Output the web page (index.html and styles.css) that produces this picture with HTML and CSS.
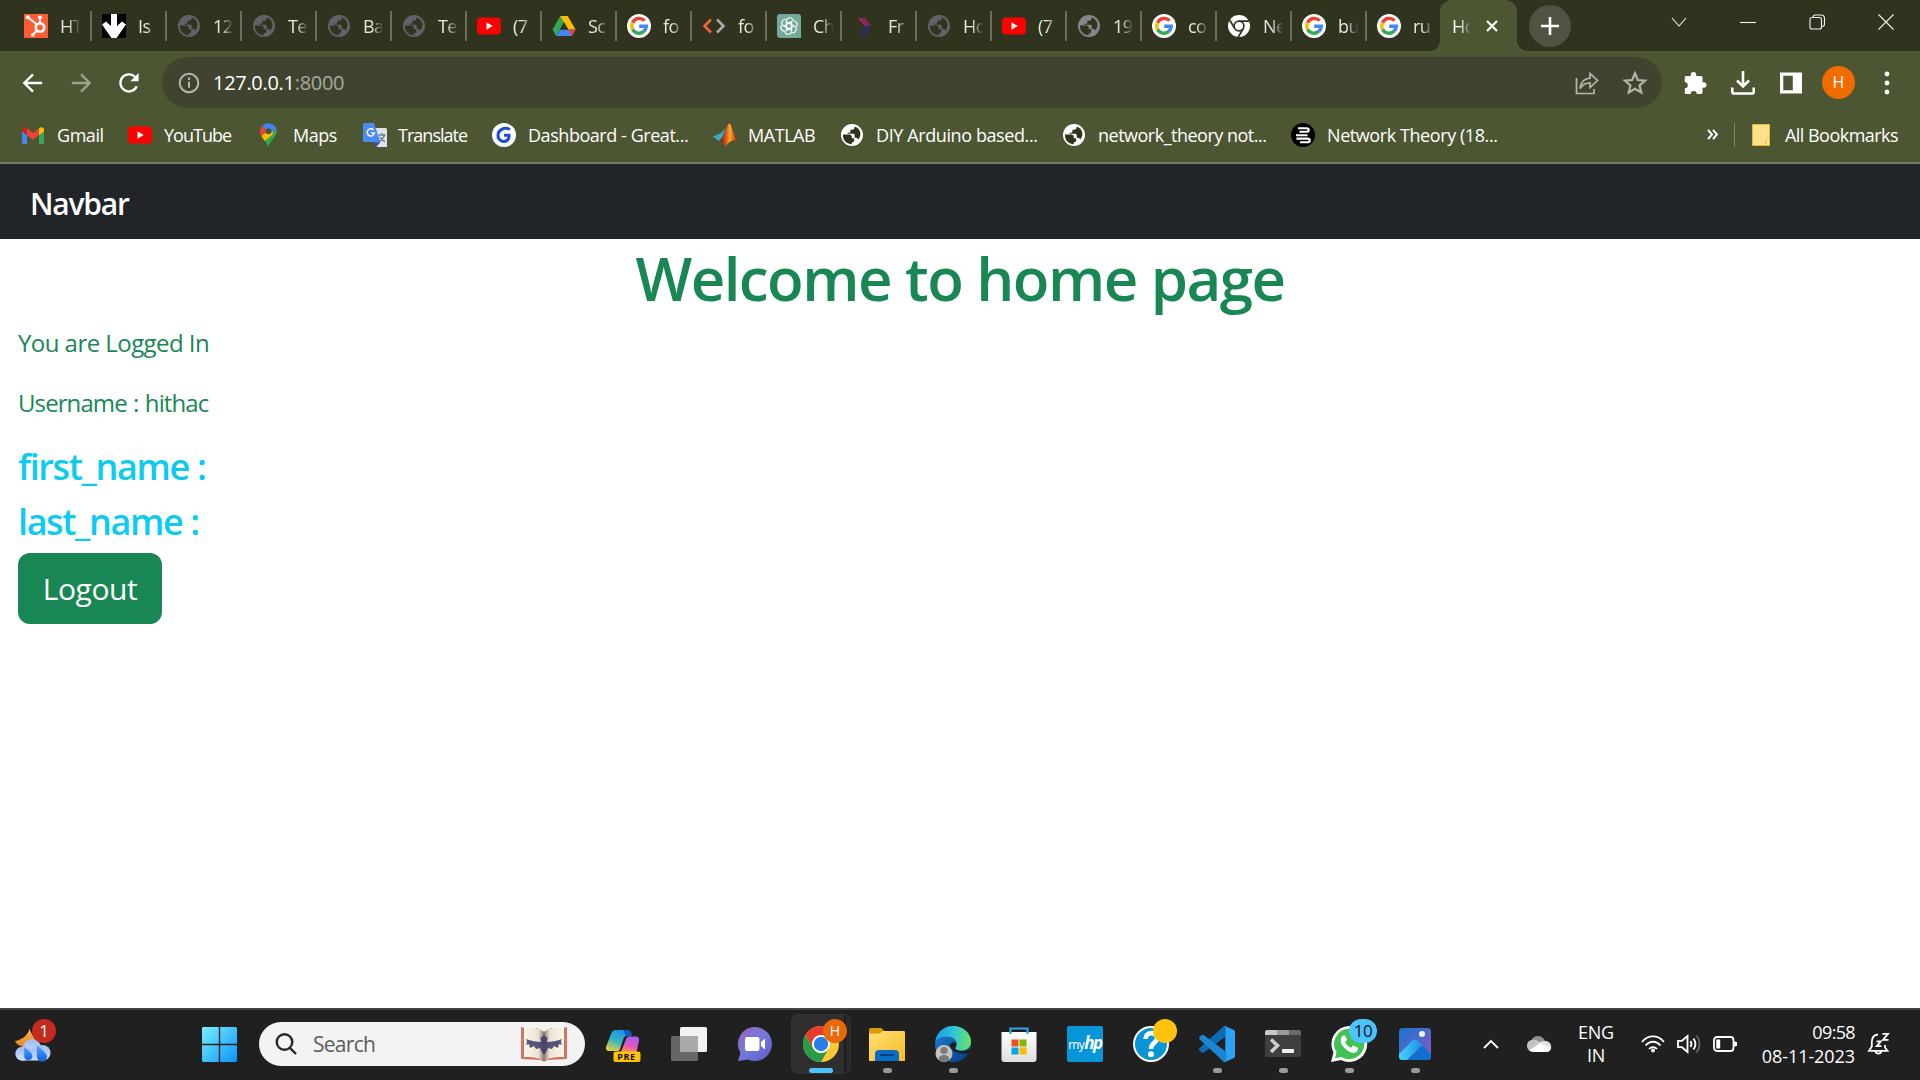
FILE: index.html
```html
<!DOCTYPE html>
<html lang="en">
<head>
<meta charset="utf-8">
<title>Home</title>
<link rel="stylesheet" href="styles.css">
</head>
<body>
<svg class="sprite" aria-hidden="true">
  <defs>
    <linearGradient id="win" x1="0" y1="0" x2="1" y2="1"><stop offset="0" stop-color="#7af0ff"/><stop offset="1" stop-color="#0a94fb"/></linearGradient>
    <linearGradient id="cop1" x1="0.6" y1="0" x2="0.2" y2="1"><stop offset="0" stop-color="#1f8fe8"/><stop offset=".5" stop-color="#2fb6c4"/><stop offset="1" stop-color="#f0cf38"/></linearGradient>
    <linearGradient id="cop2" x1="0.6" y1="0" x2="0.3" y2="1"><stop offset="0" stop-color="#a35cf0"/><stop offset=".55" stop-color="#e255c0"/><stop offset="1" stop-color="#ff8a5a"/></linearGradient>
    <linearGradient id="chat" x1="0" y1="0" x2="1" y2="1"><stop offset="0" stop-color="#9a68b8"/><stop offset=".5" stop-color="#7478dc"/><stop offset="1" stop-color="#5a5cc8"/></linearGradient>
    <linearGradient id="fold" x1="0" y1="0" x2="1" y2="1"><stop offset="0" stop-color="#ffe07a"/><stop offset="1" stop-color="#fbb91f"/></linearGradient>
    <linearGradient id="edge1" x1="0" y1="0.4" x2="1" y2="0.5"><stop offset="0" stop-color="#1a9be8"/><stop offset=".5" stop-color="#2fc4d8"/><stop offset="1" stop-color="#6be364"/></linearGradient>
    <linearGradient id="edge2" x1="0" y1="0" x2="0.8" y2="1"><stop offset="0" stop-color="#1b86d8"/><stop offset="1" stop-color="#0a3f8c"/></linearGradient>
    <linearGradient id="store" x1="0" y1="0" x2="0" y2="1"><stop offset="0" stop-color="#fff"/><stop offset="1" stop-color="#dedede"/></linearGradient>
    <linearGradient id="photo" x1="0" y1="0" x2="1" y2="1"><stop offset="0" stop-color="#1976d2"/><stop offset=".6" stop-color="#5a64c8"/><stop offset="1" stop-color="#9a55b8"/></linearGradient>
    <linearGradient id="hill" x1="0" y1="0" x2="1" y2="0"><stop offset="0" stop-color="#45d6fb"/><stop offset="1" stop-color="#1a8ae4"/></linearGradient>
    <linearGradient id="cloud" x1="0" y1="0" x2="0" y2="1"><stop offset="0" stop-color="#9dbcf2"/><stop offset="1" stop-color="#cfe0fc"/></linearGradient>
    <linearGradient id="drop" x1="0" y1="0" x2="0" y2="1"><stop offset="0" stop-color="#5aa5f5"/><stop offset="1" stop-color="#0a62e8"/></linearGradient>
    <linearGradient id="moon" x1="0" y1="0" x2="0" y2="1"><stop offset="0" stop-color="#fbc04a"/><stop offset="1" stop-color="#e8831e"/></linearGradient>
    <linearGradient id="paper" x1="0" y1="0" x2="1" y2="0"><stop offset="0" stop-color="#fbf6e8"/><stop offset=".36" stop-color="#ebe4d5"/><stop offset=".5" stop-color="#847a72"/><stop offset=".64" stop-color="#ebe4d5"/><stop offset="1" stop-color="#fbf6e8"/></linearGradient>
    <linearGradient id="mat" x1="0" y1="0" x2="1" y2="0"><stop offset="0" stop-color="#7a1a12"/><stop offset=".4" stop-color="#e0601e"/><stop offset=".58" stop-color="#ffa82a"/><stop offset="1" stop-color="#b82a14"/></linearGradient>
  </defs>
  <symbol id="i-globe" viewBox="0 0 24 24"><circle cx="12" cy="12" r="11" fill="currentColor"/><path class="hole" d="M3 11.500h6.200c1.600 0 2.600 1 2.600 2.500v1.200h2.400v2.300c0 1-.8 1.800-1.800 1.800h-.6v1.900C6.300 21 2.600 17 3 11.500zM14.500 3.400v1.100c0 1.300-.9 2.200-2.200 2.200h-1.900v1.700c0 .8-.5 1.300-1.300 1.300H7.600v1.100h5.600c.9 0 1.500.6 1.500 1.400v2.600h1c1.200 0 2 .7 2.400 1.700 3.900-4.300 3-11-3.600-13.100z"/></symbol>
  <symbol id="i-yt" viewBox="0 0 24 24"><rect y="3.500" width="24" height="17" rx="4" fill="#f00"/><path d="M9.500 8.300v7.400l6.200-3.700z" fill="#fff"/></symbol>
  <symbol id="i-g" viewBox="0 0 24 24"><circle cx="12" cy="12" r="12" fill="#fff"/><g fill="none" stroke-width="3.400"><path d="M17.600 6.700A7.300 7.300 0 0 0 5.600 8.700" stroke="#ea4335"/><path d="M5.600 8.700a7.300 7.300 0 0 0 0 6.700" stroke="#fbbc05"/><path d="M5.600 15.400a7.300 7.300 0 0 0 11.200 2" stroke="#34a853"/><path d="M16.800 17.400c1.500-1.400 2.400-3.100 2.500-5.100h-7.100" stroke="#4285f4"/></g></symbol>
  <symbol id="i-drive" viewBox="0 0 24 24"><path d="M8.300 2h7.400l-3.700 6.300-8 13.700L.5 15.500z" fill="#34a853"/><path d="M8.300 2h7.400l7.900 13.500h-7.300z" fill="#fbbc05"/><path d="M8 15.500h15.600L19.800 22H4.200z" fill="#4285f4"/><path d="M16.300 15.500h7.300L19.800 22z" fill="#ea4335"/><path d="M12 8.500l4 7H8z" fill="#30341f"/></symbol>
  <symbol id="i-chrome" viewBox="0 0 36 36"><circle cx="18" cy="18" r="18" fill="#fcc934"/><path d="M2.400 9A18 18 0 0 1 33.600 9H18a9 9 0 0 0-7.800 13.500z" fill="#e83b2e"/><path d="M2.400 9A18 18 0 0 0 18 36l7.800-13.500a9 9 0 0 1-15.600 0z" fill="#2a9c48"/><circle cx="18" cy="18" r="9" fill="#fff"/><circle cx="18" cy="18" r="7.200" fill="#2b7de9"/></symbol>
</svg>

<header class="browser">
  <div class="tabstrip">
    <div class="tab tab-first"><svg viewBox="0 0 24 24"><path fill="#ff5c35" d="M0 0h24v24H0z"/><g stroke="#fff" stroke-width="1.900" fill="none"><circle cx="16" cy="13.500" r="4.200" stroke-width="2.600"/><path d="M4 3.500l9 7M16 9V4M13 16.500l-4 4"/></g><g fill="#fff"><circle cx="3.800" cy="3.200" r="2"/><circle cx="16" cy="3.600" r="2"/><circle cx="8.800" cy="21" r="1.700"/></g></svg><span>HT</span></div>
    <div class="tab"><svg viewBox="0 0 24 24"><path d="M0 0h24v24H0z"/><path fill="#fff" d="M9 0h6v12l5-4.500 4 3L14.500 24h-5L0 10.500l4-3L9 12z"/></svg><span>Is</span></div>
    <div class="tab dim"><svg><use href="#i-globe"/></svg><span>12</span></div>
    <div class="tab dim"><svg><use href="#i-globe"/></svg><span>Te</span></div>
    <div class="tab dim"><svg><use href="#i-globe"/></svg><span>Ba</span></div>
    <div class="tab dim"><svg><use href="#i-globe"/></svg><span>Te</span></div>
    <div class="tab"><svg><use href="#i-yt"/></svg><span>(7</span></div>
    <div class="tab"><svg><use href="#i-drive"/></svg><span>Sc</span></div>
    <div class="tab"><svg><use href="#i-g"/></svg><span>fo</span></div>
    <div class="tab"><svg viewBox="0 0 24 24" fill="none" stroke-width="2.600"><path d="M9 5.500L2.500 12 9 18.500" stroke="#f0643a"/><path d="M15 5.500l6.500 6.500-6.500 6.500" stroke="#a8a8a8"/></svg><span>fo</span></div>
    <div class="tab"><svg viewBox="0 0 24 24"><path d="M3 0h18a3 3 0 0 1 3 3v21H3a3 3 0 0 1-3-3V3a3 3 0 0 1 3-3z" fill="#74aa9c"/><g fill="none" stroke="#fff" stroke-width="1.100"><path id="petal" d="M9.300 13.500V7.600c0-4.500 5.600-5 6.900-1.700M9.300 7.600l5.200 3"/><use href="#petal" transform="rotate(60 12 12)"/><use href="#petal" transform="rotate(120 12 12)"/><use href="#petal" transform="rotate(180 12 12)"/><use href="#petal" transform="rotate(240 12 12)"/><use href="#petal" transform="rotate(300 12 12)"/></g></svg><span>Ch</span></div>
    <div class="tab"><svg viewBox="0 0 24 24"><path d="M6 4h7l6 8h-6z" fill="#b3207e"/><path d="M13 12h6l-5.500 9H7z" fill="#2c2c70"/><path d="M8.500 4l7.500 8-6.500 9M11 4l7 8" fill="none" stroke="#30341f" stroke-width=".8"/></svg><span>Fr</span></div>
    <div class="tab dim"><svg><use href="#i-globe"/></svg><span>Ho</span></div>
    <div class="tab"><svg><use href="#i-yt"/></svg><span>(7</span></div>
    <div class="tab gray"><svg><use href="#i-globe"/></svg><span>19</span></div>
    <div class="tab"><svg><use href="#i-g"/></svg><span>co</span></div>
    <div class="tab"><svg viewBox="0 0 24 24"><circle cx="12" cy="12" r="11" fill="#fff"/><g fill="none" stroke="#30341f" stroke-width="1.700"><circle cx="12" cy="12" r="4.900"/><path d="M12 7.100h10M7.800 14.500L2.500 5.800M16.200 14.500L11 23.500"/></g></svg><span>Ne</span></div>
    <div class="tab"><svg><use href="#i-g"/></svg><span>bu</span></div>
    <div class="tab tab-last"><svg><use href="#i-g"/></svg><span>ru</span></div>
    <div class="tab-active"><span>Ho</span><svg viewBox="0 0 12 12" stroke="#fff" stroke-width="2.200"><path d="M1 1l10 10M11 1L1 11"/></svg></div>
    <div class="newtab"><svg viewBox="0 0 18 18" stroke="#fff" stroke-width="2.600"><path d="M9 0v18M0 9h18"/></svg></div>
    <div class="winbtns">
      <svg viewBox="0 0 16 16"><path d="M1 4l7 8 7-8"/></svg>
      <svg viewBox="0 0 16 16"><path d="M0 8.500h16"/></svg>
      <svg viewBox="0 0 16 16"><rect x="1" y="3.500" width="11.500" height="11.500" rx="2"/><path d="M4 3.500c0-1.500 1-2.500 2.500-2.500H12c2 0 3.500 1.500 3.500 3.500V10c0 1.400-1 2.500-2.500 2.500"/></svg>
      <svg viewBox="0 0 16 16"><path d="M.5.500l15 15M15.500.5l-15 15"/></svg>
    </div>
  </div>

  <div class="toolbar">
    <div class="nav">
      <svg viewBox="0 0 24 24"><path d="M22 12H3M12 2.500L2.500 12l9.500 9.500"/></svg>
      <svg class="off" viewBox="0 0 24 24"><path d="M2 12h19M12 2.500l9.500 9.500-9.500 9.500"/></svg>
      <svg viewBox="0 0 24 24"><path d="M20.500 15.500a9.300 9.300 0 1 1-1.800-10L21 8"/><path d="M22.500 1v9h-9z" fill="#fff" stroke="none"/></svg>
    </div>
    <div class="omnibox">
      <svg class="info" viewBox="0 0 22 22"><circle cx="11" cy="11" r="9.300"/><path d="M11 9.800v6M11 5.600V8"/></svg>
      <p class="url">127.0.0.1<span>:8000</span></p>
      <svg class="share" viewBox="0 0 24 24"><path d="M1.500 7v15.500H19V18M5 17.500C6 10.500 9.500 7.500 15 7.200V2.500l7.500 7-7.500 7v-4.700c-4.500 0-7.500 1.700-10 5.700z"/></svg>
      <svg class="star" viewBox="0 0 24 24"><path d="M12 3l2.600 6.200 6.700.6-5.100 4.400 1.600 6.600L12 17.300l-5.800 3.500 1.600-6.600-5.100-4.400 6.700-.6z"/></svg>
    </div>
    <div class="actions">
      <svg viewBox="0 0 24 24"><path fill="#fff" d="M3.200 5h4.600V3.700a2.700 2.700 0 0 1 5.400 0V5h4.900c.8 0 1.400.6 1.400 1.400v4.900h1.300a2.700 2.700 0 0 1 0 5.400h-1.300v4.900c0 .8-.6 1.400-1.400 1.400h-4.400a3 3 0 0 0-6 0H3.200c-.8 0-1.400-.6-1.400-1.400v-4.400a3 3 0 0 0 0-6V6.400C1.800 5.600 2.400 5 3.200 5z"/></svg>
      <svg viewBox="0 0 24 24" fill="none" stroke="#fff" stroke-width="2.600"><path d="M12 0v15M6 9.500l6 6 6-6M1.300 16.500v4.200c0 1 .7 1.800 1.800 1.800h17.800c1 0 1.800-.8 1.800-1.800v-4.200"/></svg>
      <svg viewBox="0 0 24 24"><path fill="#fff" fill-rule="evenodd" d="M1 1.500h22v21H1zM4.300 4.800v14.400h9.500V4.800z"/></svg>
      <b class="avatar">H</b>
      <svg viewBox="0 0 24 24" fill="#fff"><circle cx="12" cy="3" r="2.400"/><circle cx="12" cy="12" r="2.400"/><circle cx="12" cy="21" r="2.400"/></svg>
    </div>
  </div>

  <div class="bookmarks">
    <a class="bm-gmail"><svg viewBox="0 0 22 24"><path fill="#4285f4" d="M0 6h5v15H1.500C.6 21 0 20.500 0 19.500z"/><path fill="#34a853" d="M17 6h5v13.500c0 1-.6 1.500-1.500 1.500H17z"/><path fill="#c5221f" d="M0 6.500C0 4 3 3.500 4.500 5L5 5.300V12L0 8.500z"/><path fill="#fbbc04" d="M22 6.500C22 4 19 3.500 17.500 5l-.5.3V12l5-3.500z"/><path fill="#ea4335" d="M5 5.300l6 4.700 6-4.700V12l-6 4.700L5 12z"/></svg>Gmail</a>
    <a class="bm-yt"><svg><use href="#i-yt"/></svg>YouTube</a>
    <a class="bm-maps"><svg viewBox="0 0 17 24"><path fill="#34a853" d="M8.500 24C7.500 19 1 15.500.3 9.500L8.500.5 16.400 6c2 7-6.700 11-7.900 18z"/><path fill="#fbbc04" d="M1.300 12.500L12 5l1 6-8 7c-1.500-1.800-3-3.500-3.700-5.500z"/><path fill="#ea4335" d="M.2 8.500C.2 6 1 4.200 2.300 2.800L8 8l-6.700 5C.6 11.500.2 10 .2 8.500z"/><path fill="#4285f4" d="M2.300 2.800C6-1.500 14.500-.5 16.500 6.300L9 10z"/><circle cx="8.500" cy="8.300" r="3" fill="#4d5632"/></svg>Maps</a>
    <a class="bm-tr"><svg viewBox="0 0 24 24"><path fill="#dfe2e6" d="M8 5h14.500c.8 0 1.500.6 1.500 1.500V24H14z"/><path fill="#3a56c5" d="M11 19h6.500l-4 4.800z"/><path fill="#4b8bf5" d="M1.500 0H11l6.500 19h-16A1.500 1.500 0 0 1 0 17.500v-16C0 .6.600 0 1.500 0z"/><path d="M10.500 7a3.600 3.600 0 1 0 .9 3H8" fill="none" stroke="#fff" stroke-width="1.500"/><path d="M15.500 12h7M19 10v2M21.500 12c-.8 3-2.600 5-5 6.500M17 14c1 2 3 3.800 5 5" fill="none" stroke="#6b7f8c" stroke-width="1.300"/></svg>Translate</a>
    <a class="bm-gl"><svg viewBox="0 0 24 24"><circle cx="12" cy="12" r="12" fill="#fff"/><path d="M18 6.500C12 3.500 6 7 6 12.500c0 4.500 4.500 7 8 5.500 2.500-1 3.300-3.500 3-5.700h-5" fill="none" stroke="#1c4fd0" stroke-width="3"/></svg>Dashboard - Great...</a>
    <a class="bm-ml"><svg viewBox="0 0 24 24"><path fill="#39a9c4" d="M0 13.500L8 10l4.500-5L9 16l-3.500 2z"/><path fill="url(#mat)" d="M7 17c4-3 6-14 9-16.500 2.500-.5 4 11 8 18-4-2.500-6-1-12 5.500-1-4-2-6-5-7z"/></svg>MATLAB</a>
    <a class="bm-diy"><svg><use href="#i-globe"/></svg>DIY Arduino based...</a>
    <a class="bm-nt"><svg><use href="#i-globe"/></svg>network_theory not...</a>
    <a class="bm-nt18"><svg viewBox="0 0 24 24"><circle cx="12" cy="12" r="12"/><path d="M7 5.200h8.500c3 0 3 3.600 0 3.600H8.500M5 12.200h11.500M5.500 15.600h11c3 0 3 3.600 0 3.600H9" fill="none" stroke="#fff" stroke-width="2.100"/></svg>Network Theory (18...</a>
    <svg class="more" viewBox="0 0 11 11" fill="none" stroke="#fff" stroke-width="1.900"><path d="M1 1l4 4.500L1 10M6 1l4 4.500L6 10"/></svg>
    <i class="rule"></i>
    <a class="bm-all"><svg viewBox="0 0 18 22"><path fill="#ffe28a" stroke="#e8bc3a" d="M.5.500h17v21H.5z"/><path fill="#ffe9a6" stroke="#e8bc3a" d="M17.500 14c-2.500 0-3.500 1-3.500 3v4.500h3.500z"/></svg>All Bookmarks</a>
  </div>
</header>

<nav class="navbar"><a class="brand">Navbar</a></nav>
<main class="page">
  <h1>Welcome to home page</h1>
  <p class="status">You are Logged In</p>
  <p class="user">Username : hithac</p>
  <h3 class="first">first_name :</h3>
  <h3 class="last">last_name :</h3>
  <button class="logout">Logout</button>
</main>

<footer class="taskbar">
  <div class="weather"><svg viewBox="0 0 38 38"><path fill="url(#moon)" d="M15 4.500c-.5 6-7 12-15 13.500 2.500 6 13 9 20 2.500 4-4-5-10-5-16z"/><g fill="url(#cloud)"><circle cx="7.500" cy="31" r="7.200"/><circle cx="17.500" cy="25.500" r="9.500"/><circle cx="28.500" cy="30" r="8"/><path d="M7 26h22v12H7z"/></g><path fill="url(#drop)" d="M9.500 24c4 4.500 8.500 6 8.500 10a4.300 4.300 0 0 1-8.500 0zM22.500 22c5 5.500 10.500 8 10.500 12a5 5 0 0 1-10.500 0z"/></svg><b class="badge red">1</b></div>
  <svg class="start" viewBox="0 0 35 35" fill="url(#win)"><path d="M1 0h15.800v16.800H0V1zM18.200 0H34l1 1v15.800H18.200zM0 18.200h16.800V35H1l-1-1zM18.200 18.200H35V34l-1 1H18.200z"/></svg>
  <div class="search">
    <svg class="mag" viewBox="0 0 22 22"><circle cx="9.500" cy="9" r="7.800"/><path d="M15 15l6 6"/></svg>
    <span>Search</span>
    <svg class="book" viewBox="0 0 46 35"><path fill="#cf7466" d="M0 0l4 1h38l4-1v32l-20 1-3 2-3-2-20-1z"/><path fill="#f3f3f3" d="M14 0h18l-9 5z"/><path fill="url(#paper)" d="M3 1c9-1 16 0 20 4 4-4 11-5 20-4v29c-9-.5-15 .5-20 4-5-3.500-11-4.500-20-4z"/><path fill="#3c3a68" opacity=".85" d="M23 7l1.500 3h2l-.5 5c4 0 10-1 15-3-1.500 2-1 4 0 6l-3-1-1 4-4-2-2 3-4-1-2 4-2 3-2-3-2-4-4 1-2-3-4 2-1-4-3 1c1-2 1.500-4 0-6 5 2 11 3 15 3l-.5-5h2z"/></svg>
  </div>
  <div class="apps">
    <div class="app"><svg viewBox="0 0 36 36"><path fill="url(#cop1)" d="M6 8c1-3 2.500-4 5-4h11c3 0 4 2 4.500 5l-5 1c-2 0-2.500 1-3.500 4l-3 9c-.6 1.800-1.500 2-3 2H4c-2.500 0-3.500-2-3-4z"/><path fill="#1656c8" d="M18 4h4c3 0 4 2 5 6h-5c-2 0-2-4-4-6z"/><path fill="url(#cop2)" d="M21 13c.8-2 2-2.500 4-2.500h6c2 0 3.500 1.500 3 4L31.500 26H16z"/><rect x="8.500" y="25.500" width="27" height="10.500" rx="2" fill="#ffc400"/><text x="12.300" y="34.200" font-size="9" font-weight="700" letter-spacing=".6" fill="#111">PRE</text></svg></div>
    <div class="app"><svg viewBox="0 0 36 36"><rect x="9" y="1" width="27" height="25" rx="1.500" fill="#f2f2f2"/><rect y="10" width="27" height="25" rx="1.500" fill="#666"/><path d="M9 10h18v16H9z" fill="#a9a9a9"/></svg></div>
    <div class="app"><svg viewBox="0 0 36 36"><path fill="url(#chat)" d="M18 1a17 17 0 1 1-7 32.500L1 35l2.500-8A17 17 0 0 1 18 1z"/><rect x="8" y="11" width="14.500" height="14" rx="2" fill="#fff"/><path fill="#fff" d="M24 16l4-3.500v11L24 20z"/></svg></div>
    <div class="app"><div class="tile"><svg><use href="#i-chrome"/></svg></div><b class="badge orange">H</b><i class="run active"></i></div>
    <div class="app"><svg viewBox="0 0 36 36"><path fill="#d99a08" d="M0 4c0-1 .6-2 1.600-2h9.800c1 0 1.300.4 2 1.200L16 6v4H0z"/><path fill="url(#fold)" d="M0 7.500h11c1 0 1.500-2.500 3-2.500h20.500c1 0 1.500.5 1.500 1.500V35H0z"/><path fill="#0a6cc4" d="M6 35V28c0-2.500 1.300-4 4-4h16c2.700 0 4 1.500 4 4v7z"/><path d="M11 29h14" stroke="#083e7c" stroke-width="2"/></svg><i class="run"></i></div>
    <div class="app"><svg viewBox="0 0 36 36"><circle cx="18" cy="18" r="18" fill="url(#edge2)"/><path fill="url(#edge1)" d="M.3 15.500C2 6 9 0 18 0c10.500 0 18 7.500 18 15.500 0 6-4.500 9-9.500 9-4 0-6.300-1.300-6.300-2.500 0-1 1.300-1.500 1.300-4.500 0-4-4-7-9.500-7-6 0-9.700 2.300-11.700 5z"/><path d="M21.500 17c.3 4-1.500 4-1.200 5.500.5 2 7 4 12.200 1.500l4-1.500-3 5c-7 1-18-1.500-18.500-7.500 0-3 3-5 6.500-3z" fill="#202020"/><circle cx="9" cy="27.500" r="8.500" fill="#c6c2c0"/><circle cx="9" cy="24.500" r="3.600" fill="#7d7976"/><path d="M3.500 33.500c0-6 11-6 11 0-3 3-8 3-11 0z" fill="#7d7976"/></svg><i class="run"></i></div>
    <div class="app"><svg viewBox="0 0 36 36"><path fill="url(#store)" d="M.5 6h35v27c0 2-1 3-3 3h-29c-2 0-3-1-3-3z"/><path d="M9.500 8V2.500h17V8" fill="none" stroke="#2aa5e8" stroke-width="2.200"/><path fill="#f25022" d="M10.500 13.500h7v7h-7z"/><path fill="#7fba00" d="M18.500 13.500h7v7h-7z"/><path fill="#00a4ef" d="M10.500 21.500h7v7h-7z"/><path fill="#ffb900" d="M18.500 21.500h7v7h-7z"/></svg></div>
    <div class="app"><div class="myhp">my<b>hp</b></div></div>
    <div class="app"><svg viewBox="0 0 36 36"><circle cx="18" cy="18" r="17" fill="#0696d7" stroke="#fff" stroke-width="2"/><path d="M12.500 13c0-8 12-7.500 11.500-.5-.4 4.500-6 4.500-6 10.500" fill="none" stroke="#fff" stroke-width="4.600"/><circle cx="18" cy="28.300" r="3" fill="#fff"/></svg><b class="badge gold"></b></div>
    <div class="app"><svg viewBox="0 0 36 36"><path fill="#0a6cb4" d="M26 0v11L5 26.500c-1 .8-2 .5-3-.5l-1.500-1.500c-.7-.8-.7-1.700.2-2.500L24 1z"/><path fill="#1a86d4" d="M.7 13.500C0 12.800 0 11.700.6 11L2 9.600c1-1 2-1 3-.3L26 25v11l-2-1z"/><path fill="#2aa3f4" d="M26 0l9 4c.6.300 1 1 1 1.600v24.800c0 .8-.4 1.300-1 1.600l-9 4c-1 .2-1.800-.2-2.500-1 1.500 1 2.800.3 2.800-1.300V2.300C26.300.7 25 0 23.500 1c.7-.8 1.500-1.200 2.500-1z"/></svg><i class="run"></i></div>
    <div class="app"><svg viewBox="0 0 36 36"><rect y="4" width="36" height="27" rx="1.500" fill="#3e3e3e"/><path fill="#c9c9c9" d="M1.500 4H12v5H0V5.500z"/><path fill="#999" d="M12 4h12v5H12z"/><path fill="#6a6a6a" d="M24 4h10.500L36 5.500V9H24z"/><path d="M6 13.500l6.500 6L6 26" fill="none" stroke="#ccc" stroke-width="3.600"/><rect x="17" y="23" width="12" height="4" rx=".8" fill="#eee"/></svg><i class="run"></i></div>
    <div class="app"><svg viewBox="0 0 36 36"><path fill="#fff" d="M18 0a18 18 0 1 1-8 34L0 36l2.500-9.500A18 18 0 0 1 18 0z"/><path fill="#3fc351" d="M18 2.800a15.200 15.200 0 1 1-7.600 28.300L4 32.300l1.600-6A15.200 15.200 0 0 1 18 2.800z"/><path fill="#fff" d="M12.300 9.500c-3.800 2.500-3.600 7.500 1.200 12.500s10.500 6.600 13 2.800c.7-1 .8-2.800 0-3.200l-3.700-1.900c-.6-.3-1.100-.1-1.500.5l-1.200 1.500c-2.800-1-5-3.200-6-5.700l1.400-1.600c.4-.4.500-.9.300-1.400l-1.600-3.300c-.4-.7-1.200-.7-1.900-.2z"/></svg><b class="badge blue">10</b><i class="run"></i></div>
    <div class="app"><svg viewBox="0 0 36 36"><rect x="2" y="2" width="32" height="32" rx="3.500" fill="url(#photo)"/><path fill="#116fd0" d="M10 34l13-13c1.500-1.300 3-1.300 4.500 0l6.500 7v2.500c0 2-1.500 3.500-3.500 3.500z"/><path fill="url(#hill)" d="M2 28L15.500 14.500c1.600-1.500 3.500-1.500 5 0l5.500 5.500-3 1L10 34H5.500C3.500 34 2 32.500 2 30.500z"/><circle cx="25" cy="8" r="3" fill="#f0f4fc"/></svg><i class="run"></i></div>
  </div>
  <div class="tray">
    <svg class="up" viewBox="0 0 16 10"><path d="M1 9l7-7 7 7"/></svg>
    <svg class="od" viewBox="0 0 24 16"><path fill="#8f8f8f" d="M4 5c2-6 11-7 14 0l-2 6H4z"/><path fill="#c4c4c4" d="M5 4c4-1 6 1 8 3L4 15C-2 14-1 4 5 4z"/><path fill="#e0e0e0" d="M18 5c8 0 8 11 1 11L10 8c2-2 5-3 8-3z"/><path fill="#fff" d="M2 14l11-6.500L24 12c-.6 2.500-2 4-5 4H6c-2 0-3-.8-4-2z"/></svg>
    <p class="lang">ENG<br>IN</p>
    <svg class="wifi" viewBox="0 0 24 18"><path d="M1 7c6-7.500 16-7.500 22 0M4.500 10.500c4.500-5 10.500-5 15 0M8 14c2.500-2.600 5.500-2.600 8 0"/><circle cx="12" cy="15.500" r="1.900" fill="#fff" stroke="none"/></svg>
    <svg class="vol" viewBox="0 0 24 20"><path d="M1 6.800h4L10.500 2v16L5 13.200H1zM13.500 7c1.300 2 1.300 4 0 6M16.500 4.500c2.500 3.500 2.500 7.500 0 11"/><path d="M19.500 1.500c4 5 4 12 0 17" stroke="#666"/></svg>
    <svg class="bat" viewBox="0 0 24 16"><rect x="1" y="1" width="19.500" height="14" rx="3"/><path fill="#fff" stroke="none" d="M3.200 3.500h4v9h-4zM21 5.500l3 .5v4l-3 .5z"/></svg>
    <p class="clock"><span>09:58</span><span class="date">08-11-2023</span></p>
    <svg class="bell" viewBox="0 0 22 22"><path d="M10 1.500C5 2 3.800 5.500 3.800 9v4.500L1 17.800h18.500L17 14.500V12M7.500 18.500c.8 2.800 5 2.800 5.800 0M14.500.9h5.500l-5 6h5.500M8.500 8.400h4.300l-4 4.800h4.600"/></svg>
  </div>
</footer>
</body>
</html>
```
FILE: styles.css
```css
* { box-sizing: border-box; }
body {
  margin: 0;
  width: 1920px;
  height: 1080px;
  display: flex;
  flex-direction: column;
  overflow: hidden;
  background: #fff;
  font-family: "Open Sans", "Noto Sans", sans-serif;
}
h1, h3, p { margin: 0; }
svg { display: block; flex: none; overflow: visible; }
.sprite { position: absolute; width: 0; height: 0; }

/* Browser frame */
.browser { flex: none; height: 164px; background: #4d5632; border-bottom: 2px solid #777a62; color: #fff; }

.tabstrip { display: flex; align-items: center; height: 51px; padding-left: 17px; background: #30341f; }
.tab { display: flex; align-items: center; flex: none; width: 75px; height: 51px; padding-left: 10px; gap: 12px; font-size: 18px; color: #e8eae0; }
.tab svg { width: 24px; height: 24px; }
.tab span, .tab-active span {
  width: 24px;
  line-height: 30px;
  white-space: nowrap;
  letter-spacing: -0.6px;
  -webkit-mask-image: linear-gradient(90deg, #000 35%, transparent 85%);
  mask-image: linear-gradient(90deg, #000 35%, transparent 85%);
}
.tab::after { content: ""; flex: none; width: 2px; height: 30px; margin-left: -9px; background: #6b6e5d; }
.tab-first { padding-left: 7px; }
.tab-first::after { margin-left: -6px; }
.tab-last::after { display: none; }
.hole { fill: #30341f; }
.dim svg { color: #5f6368; }
.gray svg { color: #85868a; }

.tab-active {
  position: relative;
  display: flex;
  align-items: center;
  gap: 10px;
  width: 77px;
  height: 51px;
  margin-left: -2px;
  padding-left: 12px;
  border-radius: 12px 12px 0 0;
  background: #4d5632;
  font-size: 18px;
}
.tab-active span {
  -webkit-mask-image: linear-gradient(90deg, #000 30%, transparent 80%);
  mask-image: linear-gradient(90deg, #000 30%, transparent 80%);
}
.tab-active svg { width: 12px; height: 12px; }
.tab-active::before, .tab-active::after {
  content: "";
  position: absolute;
  bottom: 0;
  width: 10px;
  height: 10px;
}
.tab-active::before { left: -10px; background: radial-gradient(circle at 0 0, transparent 9.5px, #4d5632 10px); }
.tab-active::after { right: -10px; background: radial-gradient(circle at 100% 0, transparent 9.5px, #4d5632 10px); }
.newtab { display: grid; place-items: center; width: 42px; height: 42px; margin-left: 12px; border-radius: 50%; background: #4f5341; }
.newtab svg { width: 18px; height: 18px; }
.winbtns { display: flex; gap: 53px; margin: -8px 26px 0 auto; }
.winbtns svg { width: 16px; height: 16px; fill: none; stroke: #f2f2ee; stroke-width: 1.1; }

.toolbar { display: flex; align-items: center; height: 63px; }
.nav { display: flex; gap: 24px; width: 162px; padding-left: 21px; }
.nav svg { width: 24px; height: 24px; fill: none; stroke: #fff; stroke-width: 2.6; padding: 1px; }
.nav .off { opacity: .45; }
.omnibox { display: flex; align-items: center; width: 1500px; height: 51px; padding: 0 17px 0 16px; border-radius: 26px; background: #40442f; }
.omnibox svg { fill: none; stroke: #b4b6ac; stroke-width: 2; }
.info { width: 22px; height: 22px; }
.url { flex: 1; margin-left: 13px; font-size: 20px; line-height: 30px; letter-spacing: -.3px; }
.url span { color: #a9aaa0; }
.share { width: 24px; height: 24px; margin-right: 23px; }
.omnibox .share { stroke-width: 1.7; }
.star { width: 26px; height: 26px; margin-right: -3px; }
.actions { display: flex; align-items: center; gap: 24px; margin-left: 21px; }
.actions svg { width: 24px; height: 24px; }
.avatar { width: 33px; height: 33px; margin: 0 -4px 0 -5px; border-radius: 50%; background: #f06b00; font-size: 16px; font-weight: 400; line-height: 33px; text-align: center; }

.bookmarks { display: flex; align-items: center; height: 41px; padding-left: 22px; font-size: 18px; line-height: 30px; letter-spacing: -.45px; white-space: nowrap; }
.bookmarks a { display: flex; align-items: center; gap: 12px; }
.bookmarks a svg { width: 24px; height: 24px; }
.bookmarks .hole { fill: #4d5632; }
.bm-gmail { width: 106px; }
.bookmarks .bm-gmail svg { width: 22px; margin-right: 1px; }
.bm-yt { width: 132px; letter-spacing: -.98px; }
.bm-maps { width: 103px; }
.bookmarks .bm-maps svg { width: 17px; margin-right: 4px; }
.bm-tr { width: 129px; letter-spacing: -.98px; }
.bm-tr svg { margin-right: -1px; }
.bm-gl { width: 221px; }
.bm-ml { width: 127px; }
.bm-ml svg { margin-right: -1px; }
.bm-diy { width: 222px; letter-spacing: -.4px; }
.bm-nt { width: 229px; letter-spacing: -.5px; }
.bm-nt18 { width: 210px; letter-spacing: -.42px; }
.more { width: 11px; height: 11px; margin-left: 206px; }
.rule { width: 1px; height: 24px; margin: 0 17px 0 16px; background: #80865f; }
.bm-all { letter-spacing: -.53px; }
.bookmarks .bm-all svg { width: 18px; height: 22px; margin-right: 3px; }

/* Page */
.navbar { display: flex; align-items: center; flex: none; height: 75px; padding-left: 30px; background: #212529; }
.brand { color: #fff; font-size: 30px; font-weight: 600; letter-spacing: -1.2px; line-height: 45px; padding-top: 3px; }
.page { flex: 1; padding: 3px 18px 0; color: #198754; }
.page h1 { margin-bottom: 11px; font-size: 60px; font-weight: 600; line-height: 72px; letter-spacing: -1.54px; text-align: center; }
.page p { margin-bottom: 24px; font-size: 24px; line-height: 36px; letter-spacing: -.55px; }
.page .user { letter-spacing: -.9px; word-spacing: 1px; }
.page h3 { margin-bottom: 12px; color: #0dcaf0; font-size: 36px; font-weight: 600; line-height: 43px; letter-spacing: -1.35px; }
.page .last { margin-bottom: 10px; letter-spacing: -1.4px; }
.logout { display: block; width: 144px; height: 71px; padding: 0; border: 0; border-radius: 12px; background: #198754; color: #fff; font: 400 30px/71px "Open Sans", sans-serif; letter-spacing: -.4px; }

/* Taskbar */
.taskbar { display: flex; align-items: center; flex: none; height: 72px; padding-bottom: 2px; border-top: 2px solid #444; background: #202020; color: #fff; }
.weather { position: relative; width: 38px; height: 38px; margin: -5px 0 0 15px; }
.weather svg { width: 37px; height: 38px; }
.badge { position: absolute; display: grid; place-items: center; width: 24px; height: 24px; border-radius: 12px; font-weight: 400; font-size: 17px; line-height: 24px; }
.red { left: 17px; top: -4px; background: #c42b1c; }
.start { width: 35px; height: 35px; margin-left: 149px; }
.search { display: flex; align-items: center; width: 326px; height: 44px; margin-left: 22px; padding: 0 18px 0 16px; border-radius: 22px; background: #f3f3f3; color: #5c5c5c; }
.search span { flex: 1; margin-left: 16px; font-size: 21px; line-height: 30px; letter-spacing: -.72px; }
.mag { width: 22px; height: 22px; fill: none; stroke: #262626; stroke-width: 2.4; }
.book { width: 46px; height: 35px; }
.apps { display: flex; margin-left: 5px; }
.app { position: relative; display: grid; place-items: center; width: 66px; height: 68px; }
.app svg { width: 36px; height: 36px; font-family: "Open Sans", sans-serif; }
.tile { display: grid; place-items: center; width: 60px; height: 60px; padding-right: 4px; border: 1px solid #333; border-radius: 7px; background: linear-gradient(90deg, #2f2f2f 52px, #1c1c1c 52px, #1c1c1c 54px, #2a2a2a 54px); }
.tile svg { margin-left: 3px; }
.orange { left: 35px; top: 9px; background: #e8680a; font-size: 14px; }
.gold { left: 35px; top: 9px; background: #ffc20e; }
.blue { left: 33px; top: 9px; width: 28px; background: #4cc2ff; color: #111; font-size: 17px; letter-spacing: -.5px; }
.run { position: absolute; left: 29px; bottom: 5px; width: 9px; height: 5px; border-radius: 3px; background: #9a9a9a; }
.run.active { left: 21px; width: 24px; background: #4cc2ff; }
.myhp { width: 36px; height: 36px; border-radius: 2px; background: #0696d7; font-size: 12px; line-height: 34px; text-align: center; letter-spacing: -.6px; }
.myhp b { font-size: 17px; font-style: italic; letter-spacing: -1.5px; }

.tray { display: flex; align-items: center; margin-left: 35px; }
.tray svg { fill: none; stroke: #fff; stroke-width: 1.8; }
.up { width: 16px; height: 10px; }
.tray .od { width: 24px; height: 16px; margin-left: 28px; stroke: none; }
.lang { width: 50px; margin-left: 20px; font-size: 18px; line-height: 23px; text-align: center; letter-spacing: -.28px; }
.wifi { width: 24px; height: 18px; margin-left: 20px; }
.vol { width: 24px; height: 20px; margin-left: 12px; }
.bat { width: 24px; height: 16px; margin-left: 12px; }
.clock { display: flex; flex-direction: column; align-items: flex-end; width: 118px; margin-top: -1px; font-size: 18px; line-height: 24px; letter-spacing: -.65px; }
.date { letter-spacing: -.07px; }
.bell { width: 22px; height: 22px; margin-left: 13px; }
```
